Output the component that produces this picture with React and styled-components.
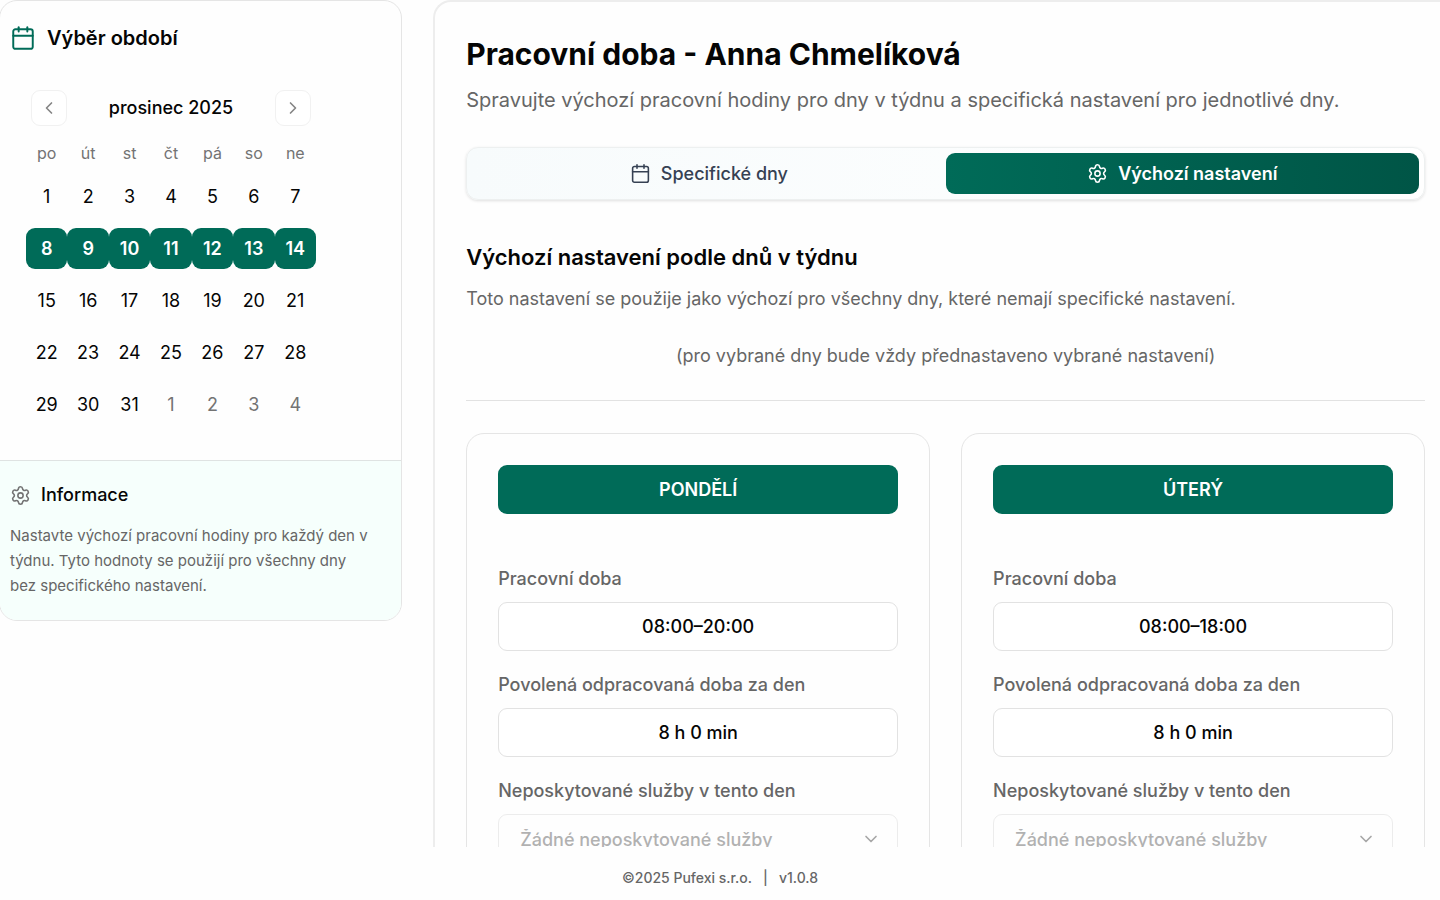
import React from 'react'
import styled, { createGlobalStyle } from 'styled-components'
import { Calendar, ChevronDown, ChevronLeft, ChevronRight, Settings } from 'lucide-react'

const weekdays = ['po', 'út', 'st', 'čt', 'pá', 'so', 'ne']

const weeks = [
  [1, 2, 3, 4, 5, 6, 7],
  [8, 9, 10, 11, 12, 13, 14],
  [15, 16, 17, 18, 19, 20, 21],
  [22, 23, 24, 25, 26, 27, 28],
  [29, 30, 31, 1, 2, 3, 4],
]

const selectedWeek = 1

const days = [
  { id: 'po', name: 'PONDĚLÍ', hours: '08:00–20:00', allowed: '8 h 0 min' },
  { id: 'ut', name: 'ÚTERÝ', hours: '08:00–18:00', allowed: '8 h 0 min' },
]

function MonthCalendar() {
  return (
    <CalendarBox>
      <MonthBar>
        <MonthButton type="button" aria-label="Předchozí měsíc"><ChevronLeft size={20} /></MonthButton>
        <MonthName>prosinec 2025</MonthName>
        <MonthButton type="button" aria-label="Další měsíc"><ChevronRight size={20} /></MonthButton>
      </MonthBar>
      <CalendarTable>
        <thead>
          <tr>
            {weekdays.map((day) => <Weekday key={day}>{day}</Weekday>)}
          </tr>
        </thead>
        <tbody>
          {weeks.map((week, row) => (
            <tr key={row}>
              {week.map((day) => (
                <DayCell key={day}>
                  <DayButton type="button" $selected={row === selectedWeek} $outside={row === 4 && day < 8}>
                    {day}
                  </DayButton>
                </DayCell>
              ))}
            </tr>
          ))}
        </tbody>
      </CalendarTable>
    </CalendarBox>
  )
}

function DayCard({ day }) {
  return (
    <Card>
      <DayTitle>{day.name}</DayTitle>
      <Field>
        <Label htmlFor={`hours-${day.id}`}>Pracovní doba</Label>
        <Input id={`hours-${day.id}`} defaultValue={day.hours} />
      </Field>
      <Field>
        <Label htmlFor={`allowed-${day.id}`}>Povolená odpracovaná doba za den</Label>
        <Input id={`allowed-${day.id}`} defaultValue={day.allowed} />
      </Field>
      <Field>
        <Label htmlFor={`services-${day.id}`}>Neposkytované služby v tento den</Label>
        <SelectBox>
          <Select id={`services-${day.id}`} disabled>
            <option>Žádné neposkytované služby</option>
          </Select>
          <ChevronDown size={20} />
        </SelectBox>
      </Field>
    </Card>
  )
}

function App() {
  return (
    <Page>
      <GlobalStyle />
      <Content>
        <Sidebar>
          <SidebarTitle><Calendar size={26} />Výběr období</SidebarTitle>
          <MonthCalendar />
          <Info>
            <InfoTitle><Settings size={21} />Informace</InfoTitle>
            <InfoText>
              Nastavte výchozí pracovní hodiny pro každý den v týdnu. Tyto hodnoty se použijí pro všechny dny bez specifického nastavení.
            </InfoText>
          </Info>
        </Sidebar>
        <Main>
          <Title>Pracovní doba - Anna Chmelíková</Title>
          <Subtitle>Spravujte výchozí pracovní hodiny pro dny v týdnu a specifická nastavení pro jednotlivé dny.</Subtitle>
          <Tabs role="tablist">
            <Tab type="button" role="tab" aria-selected="false"><Calendar size={21} />Specifické dny</Tab>
            <Tab type="button" role="tab" aria-selected="true" $active><Settings size={21} />Výchozí nastavení</Tab>
          </Tabs>
          <SectionTitle>Výchozí nastavení podle dnů v týdnu</SectionTitle>
          <SectionText>Toto nastavení se použije jako výchozí pro všechny dny, které nemají specifické nastavení.</SectionText>
          <SectionNote>(pro vybrané dny bude vždy přednastaveno vybrané nastavení)</SectionNote>
          <Cards>
            {days.map((day) => <DayCard key={day.id} day={day} />)}
          </Cards>
        </Main>
      </Content>
      <Footer>
        <span>©2025 Pufexi s.r.o.</span>
        <span>|</span>
        <span>v1.0.8</span>
      </Footer>
    </Page>
  )
}

export default App

const GlobalStyle = createGlobalStyle`
  * {
    box-sizing: border-box;
  }
  body {
    margin: 0;
    background: #fefefe;
    color: #050505;
    font-family: Inter, "Liberation Sans", sans-serif;
  }
  button, input, select {
    font-family: inherit;
    color: inherit;
  }
  h1, h2, h3, p {
    margin: 0;
  }
`

const Page = styled.div`
  display: flex;
  flex-direction: column;
  height: 100vh;
  overflow: hidden;
`

const Content = styled.div`
  display: flex;
  flex: 1;
  min-height: 0;
  align-items: flex-start;
  gap: 31px;
  overflow: hidden;
`

const Sidebar = styled.aside`
  flex: 0 0 28%;
  margin-left: -1px;
  border: 1px solid #e5e5e5;
  border-radius: 18px;
  overflow: hidden;
`

const SidebarTitle = styled.h2`
  display: flex;
  align-items: center;
  gap: 11px;
  padding: 23px 10px 0;
  font-size: 20px;
  line-height: 28px;
  font-weight: 600;

  svg {
    color: #006b58;
    stroke-width: 1.8;
  }
`

const CalendarBox = styled.div`
  width: 290px;
  margin: 38px 0 35px 26px;
`

const MonthBar = styled.div`
  display: flex;
  align-items: center;
  justify-content: space-between;
  padding: 0 5px;
`

const MonthName = styled.span`
  font-size: 18px;
  line-height: 26px;
  font-weight: 500;
`

const MonthButton = styled.button`
  display: flex;
  align-items: center;
  justify-content: center;
  width: 36px;
  height: 36px;
  padding: 0;
  background: #fff;
  border: 1px solid #f1f1f1;
  border-radius: 9px;

  svg {
    color: #858585;
  }
`

const CalendarTable = styled.table`
  width: 100%;
  margin-top: 15px;
  border-collapse: collapse;
  table-layout: fixed;
`

const Weekday = styled.th`
  padding: 0;
  height: 24px;
  color: #737373;
  font-size: 16px;
  font-weight: 400;
`

const DayCell = styled.td`
  padding: 11px 0 0;
`

const DayButton = styled.button`
  display: block;
  width: 100%;
  height: 41px;
  padding: 0;
  border: 0;
  border-radius: 9px;
  background: ${({ $selected }) => ($selected ? '#006b58' : 'transparent')};
  color: ${({ $selected, $outside }) => ($selected ? '#fff' : $outside ? '#737373' : '#050505')};
  font-size: 18px;
  font-weight: ${({ $selected }) => ($selected ? 600 : 400)};
`

const Info = styled.section`
  padding: 20px 28px 22px 10px;
  border-top: 1px solid #dfe3e2;
  background: #f6fffc;
`

const InfoTitle = styled.h3`
  display: flex;
  align-items: center;
  gap: 10px;
  font-size: 18px;
  line-height: 28px;
  font-weight: 500;

  svg {
    color: #737373;
    stroke-width: 1.8;
  }
`

const InfoText = styled.p`
  margin-top: 14px;
  color: #666;
  font-size: 15px;
  line-height: 25px;
`

const Main = styled.main`
  flex: 1;
  min-width: 0;
  padding: 32px 15px 32px 31px;
  border: 2px solid #ededed;
  border-right: 0;
  border-radius: 18px 0 0 18px;
`

const Title = styled.h1`
  font-size: 30px;
  line-height: 40px;
  font-weight: 700;
`

const Subtitle = styled.p`
  margin-top: 12px;
  color: #666;
  font-size: 20px;
  line-height: 28px;
`

const Tabs = styled.div`
  display: grid;
  grid-template-columns: 1fr 1fr;
  margin-top: 33px;
  padding: 5px;
  border: 1px solid #edf0f0;
  border-radius: 12px;
  background: linear-gradient(90deg, #f7fbfc, #fff);
  box-shadow: 0 1px 3px rgba(0, 0, 0, 0.12);
`

const Tab = styled.button`
  display: flex;
  align-items: center;
  justify-content: center;
  gap: 10px;
  height: 41px;
  border: 0;
  border-radius: 9px;
  background: ${({ $active }) => ($active ? 'linear-gradient(90deg, #006b58, #005546)' : 'transparent')};
  color: ${({ $active }) => ($active ? '#fff' : '#364153')};
  font-size: 18px;
  font-weight: ${({ $active }) => ($active ? 600 : 500)};

  svg {
    stroke-width: 1.8;
  }
`

const SectionTitle = styled.h2`
  margin-top: 41px;
  font-size: 22px;
  line-height: 32px;
  font-weight: 600;
`

const SectionText = styled.p`
  margin-top: 12px;
  color: #666;
  font-size: 18px;
  line-height: 28px;
`

const SectionNote = styled.p`
  padding: 29px 0 30px;
  border-bottom: 1px solid #e2e2e2;
  color: #666;
  font-size: 18px;
  line-height: 28px;
  text-align: center;
`

const Cards = styled.div`
  display: grid;
  grid-template-columns: 1fr 1fr;
  gap: 31px;
  margin-top: 32px;
`

const Card = styled.section`
  display: flex;
  flex-direction: column;
  gap: 20px;
  padding: 31px;
  border: 1px solid #e5e5e5;
  border-radius: 18px;
`

const DayTitle = styled.h3`
  margin-bottom: 31px;
  border-radius: 9px;
  background: #006b58;
  color: #fff;
  font-size: 18px;
  line-height: 49px;
  font-weight: 600;
  text-align: center;
`

const Field = styled.div`
  display: flex;
  flex-direction: column;
  gap: 9px;
`

const Label = styled.label`
  color: #666;
  font-size: 18px;
  line-height: 28px;
  font-weight: 500;
`

const Input = styled.input`
  width: 100%;
  height: 49px;
  padding: 0 20px;
  border: 1px solid #e2e2e2;
  border-radius: 9px;
  background: #fff;
  font-size: 18px;
  font-weight: 500;
  text-align: center;
`

const SelectBox = styled.div`
  display: grid;
  align-items: center;
  opacity: 0.5;

  > * {
    grid-area: 1 / 1;
  }
  svg {
    justify-self: end;
    margin-right: 17px;
    color: #525252;
    pointer-events: none;
  }
`

const Select = styled.select`
  appearance: none;
  width: 100%;
  height: 50px;
  padding: 0 21px;
  border: 1px solid #dcdcdc;
  border-radius: 9px;
  background: #fff;
  color: #666;
  font-size: 18px;
  font-weight: 500;
  opacity: 1;
`

const Footer = styled.footer`
  display: flex;
  justify-content: center;
  gap: 11px;
  height: 53px;
  padding: 20px 0 11px;
  color: #666;
  font-size: 14px;
  line-height: 22px;
  font-weight: 500;
`
